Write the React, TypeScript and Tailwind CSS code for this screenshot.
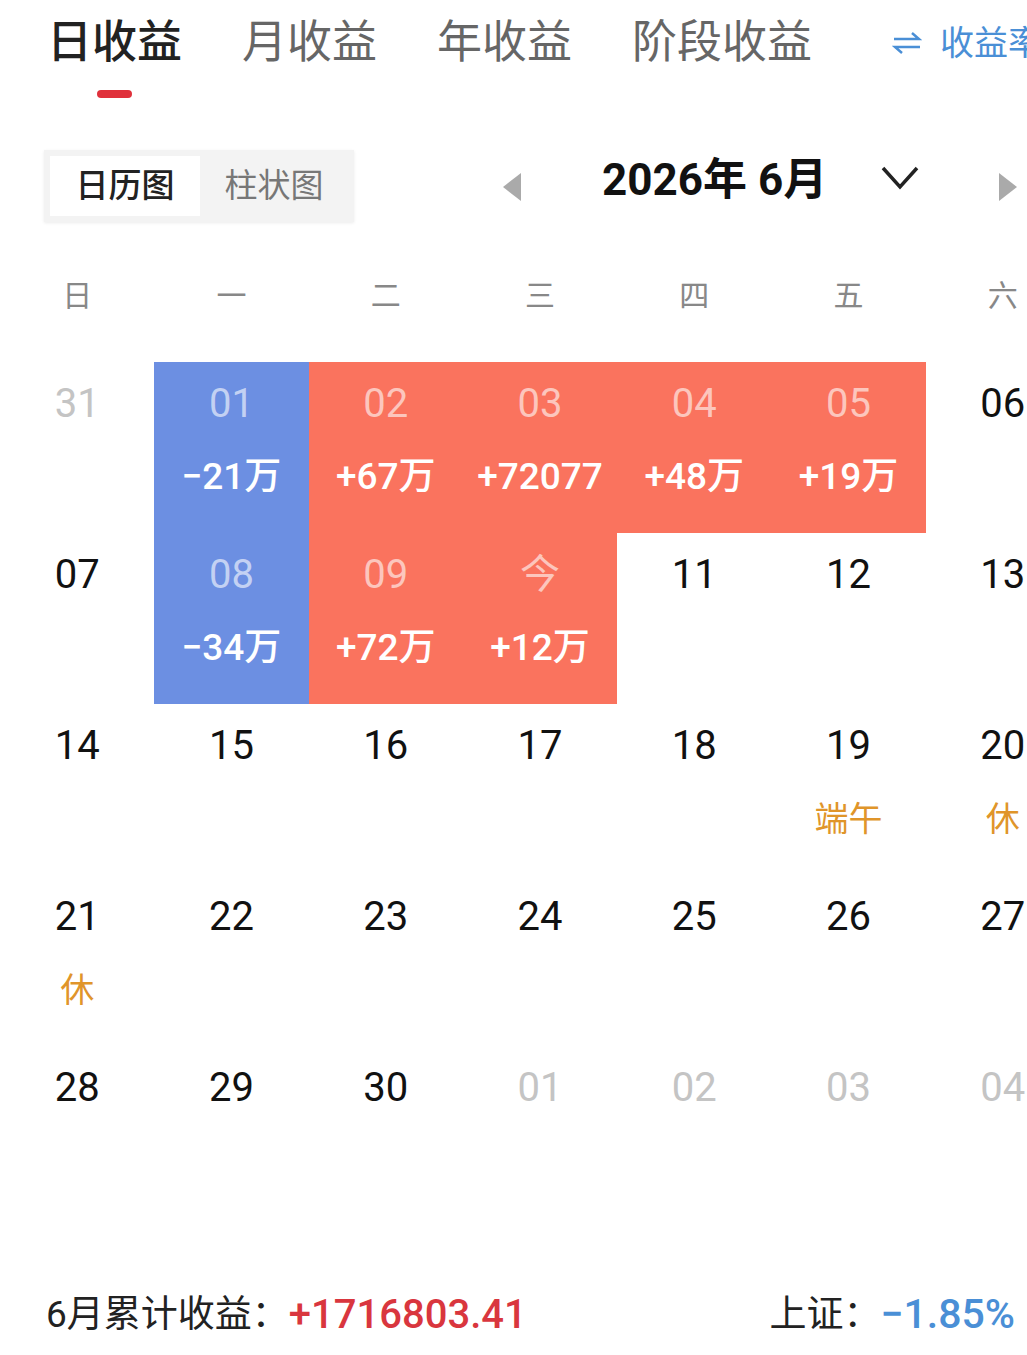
import React from 'react';

type Cell = {
  day: string;
  kind?: 'muted' | 'up' | 'down';
  value?: string;
  note?: string;
};

const rows: Cell[][] = [
  [
    { day: '31', kind: 'muted' },
    { day: '01', kind: 'down', value: '−21万' },
    { day: '02', kind: 'up', value: '+67万' },
    { day: '03', kind: 'up', value: '+72077' },
    { day: '04', kind: 'up', value: '+48万' },
    { day: '05', kind: 'up', value: '+19万' },
    { day: '06' },
  ],
  [
    { day: '07' },
    { day: '08', kind: 'down', value: '−34万' },
    { day: '09', kind: 'up', value: '+72万' },
    { day: '今', kind: 'up', value: '+12万' },
    { day: '11' },
    { day: '12' },
    { day: '13' },
  ],
  [
    { day: '14' },
    { day: '15' },
    { day: '16' },
    { day: '17' },
    { day: '18' },
    { day: '19', note: '端午' },
    { day: '20', note: '休' },
  ],
  [
    { day: '21', note: '休' },
    { day: '22' },
    { day: '23' },
    { day: '24' },
    { day: '25' },
    { day: '26' },
    { day: '27' },
  ],
  [
    { day: '28' },
    { day: '29' },
    { day: '30' },
    { day: '01', kind: 'muted' },
    { day: '02', kind: 'muted' },
    { day: '03', kind: 'muted' },
    { day: '04', kind: 'muted' },
  ],
];

const weekdays = ['日', '一', '二', '三', '四', '五', '六'];
const tabs = ['日收益', '月收益', '年收益', '阶段收益'];

function DayCell({ cell }: { cell: Cell }) {
  const bg =
    cell.kind === 'up' ? 'bg-[#fa735e]' : cell.kind === 'down' ? 'bg-[#6c8fe2]' : 'bg-white';
  const dayColor =
    cell.kind === 'up' || cell.kind === 'down'
      ? 'text-white/60'
      : cell.kind === 'muted'
        ? 'text-[#c4c4c4]'
        : 'text-[#111]';

  return (
    <div className={`h-[171px] flex flex-col items-center pt-[20px] ${bg}`}>
      <span className={`text-[40px] leading-[44px] ${dayColor}`}>{cell.day}</span>
      {cell.value && (
        <span className="mt-[31px] text-[37px] leading-[40px] font-medium text-white">
          {cell.value}
        </span>
      )}
      {cell.note && (
        <span className="mt-[31px] text-[34px] leading-[40px] text-[#e0952a]">{cell.note}</span>
      )}
    </div>
  );
}

export default function App() {
  return (
    <div
      className="w-[1027px] h-[1355px] overflow-hidden bg-white"
      style={{ fontFamily: "Roboto, 'Noto Sans CJK SC', sans-serif" }}
    >
      <div className="w-[1080px]">
        {/* Tabs */}
        <div className="h-[110px] flex items-start pl-[47px] pt-[20px]">
          {tabs.map((t, i) => (
            <div key={t} className={`flex flex-col items-center ${i > 0 ? 'ml-[60px]' : ''}`}>
              <span
                className={`text-[45px] leading-[46px] ${
                  i === 0 ? 'text-[#222] font-medium' : 'text-[#666]'
                }`}
              >
                {t}
              </span>
              {i === 0 && <span className="mt-[24px] w-[35px] h-[8px] rounded-full bg-[#e0313b]" />}
            </div>
          ))}
          <div className="ml-[80px] flex items-center gap-[18px] h-[46px] text-[#4a8fd6]">
            <svg width="30" height="22" viewBox="0 0 30 22" fill="none" stroke="currentColor" strokeWidth="2.5">
              <path d="M2 7 H27 L20 1" />
              <path d="M28 15 H3 L10 21" />
            </svg>
            <span className="text-[34px] leading-[40px] whitespace-nowrap">收益率</span>
          </div>
        </div>

        {/* Toggle & month nav */}
        <div className="mt-[40px] h-[72px] flex items-center">
          <div className="ml-[44px] w-[310px] h-[72px] bg-[#f3f3f3] p-[6px] flex shadow-[0_1px_3px_rgba(0,0,0,0.08)]">
            <div className="w-[150px] h-full bg-white flex items-center justify-center text-[33px] font-medium text-[#222]">
              日历图
            </div>
            <div className="flex-1 flex items-center justify-center text-[33px] text-[#777]">柱状图</div>
          </div>
          <svg className="ml-[149px] mt-[2px]" width="18" height="28" viewBox="0 0 18 28">
            <polygon points="18,0 0,14 18,28" fill="#aaaaaa" />
          </svg>
          <span className="ml-[81px] -mt-[12px] text-[44px] leading-[50px] font-bold text-[#111]">
            2026年 6月
          </span>
          <svg className="ml-[54px] -mt-[16px]" width="38" height="24" viewBox="0 0 38 24" fill="none">
            <polyline points="2,2 19,21 36,2" stroke="#222" strokeWidth="3.5" />
          </svg>
          <svg className="ml-[80px] mt-[2px]" width="18" height="28" viewBox="0 0 18 28">
            <polygon points="0,0 18,14 0,28" fill="#aaaaaa" />
          </svg>
        </div>

        {/* Weekdays */}
        <div className="mt-[50px] grid grid-cols-7 h-[46px]">
          {weekdays.map((w) => (
            <div key={w} className="flex items-center justify-center text-[30px] text-[#888]">
              {w}
            </div>
          ))}
        </div>

        {/* Calendar grid */}
        <div className="mt-[44px] grid grid-cols-7">
          {rows.flat().map((c, i) => (
            <DayCell key={i} cell={c} />
          ))}
        </div>
      </div>

      {/* Footer */}
      <div className="w-[1027px] mt-[73px] h-[50px] flex items-center pl-[46px] pr-[12px]">
        <span className="text-[37px] text-[#222]">6月累计收益：</span>
        <span className="text-[40px] font-medium text-[#d9363e]">+1716803.41</span>
        <span className="ml-auto text-[37px] text-[#222]">上证：</span>
        <span className="text-[41px] font-medium text-[#4a8fd6]">−1.85%</span>
      </div>
    </div>
  );
}
